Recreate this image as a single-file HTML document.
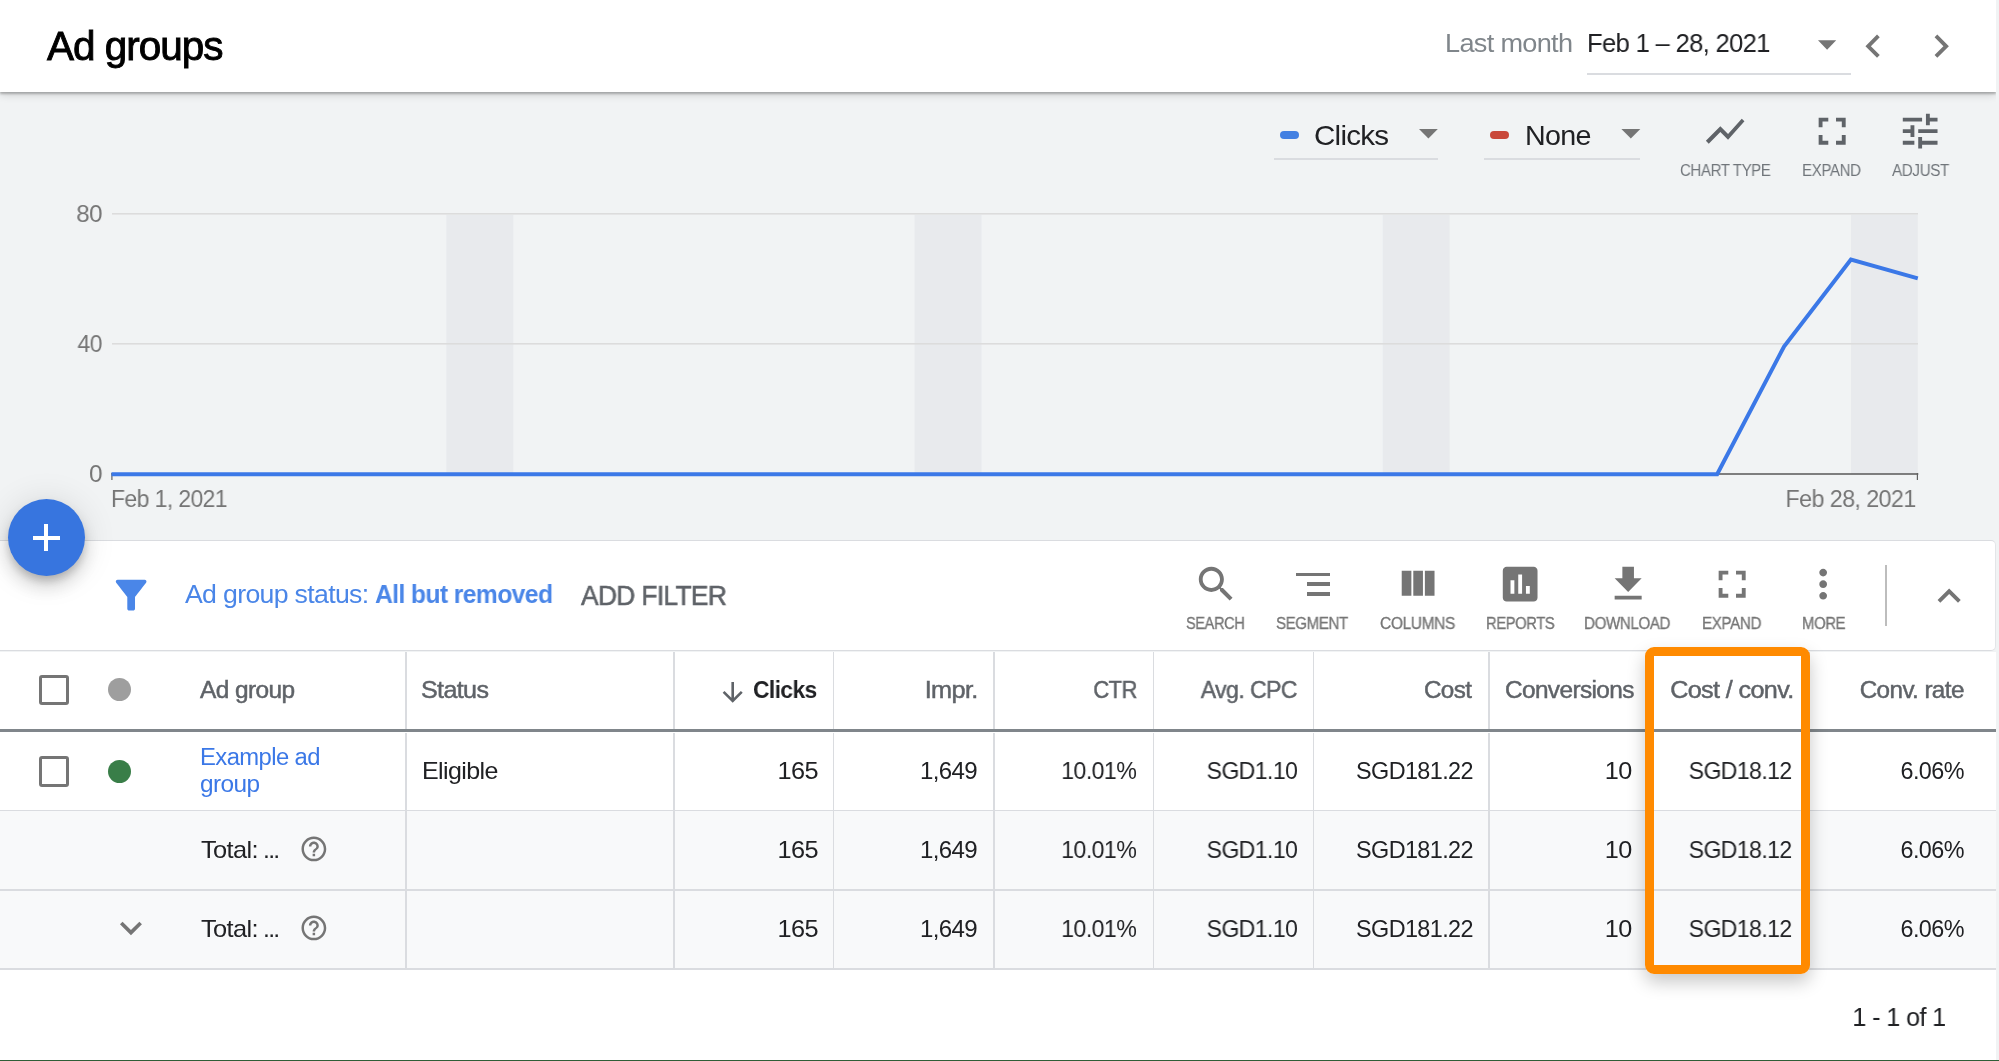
<!DOCTYPE html><html><head><meta charset="utf-8"><style>
html,body{margin:0;padding:0}body{width:1999px;height:1061px;position:relative;overflow:hidden;background:#f1f3f4;font-family:'Liberation Sans',sans-serif}
.t{position:absolute;white-space:nowrap;line-height:1;will-change:transform}
</style></head><body>
<svg style="position:absolute;left:0;top:0" width="1999" height="1061"><rect x="446.41" y="214.8" width="66.88" height="259.2" fill="#e8eaed"/><rect x="914.58" y="214.8" width="66.88" height="259.2" fill="#e8eaed"/><rect x="1382.75" y="214.8" width="66.88" height="259.2" fill="#e8eaed"/><rect x="1850.92" y="214.8" width="66.88" height="259.2" fill="#e8eaed"/><rect x="112" y="213" width="1806" height="1.6" fill="#dcdcdc"/><rect x="112" y="343" width="1806" height="1.6" fill="#dcdcdc"/><rect x="111.5" y="473.2" width="1806.8" height="1.6" fill="#616161"/><rect x="111.3" y="473" width="1.2" height="7" fill="#616161"/><rect x="1916.8" y="473" width="1.2" height="7" fill="#616161"/><polyline fill="none" stroke="#3b78e7" stroke-width="4" stroke-linejoin="miter" points="111.50,474.20 1717.16,474.20 1784.04,346.50 1850.92,259.60 1917.80,278.40"/></svg>
<div style="position:absolute;left:0.00px;top:0.00px;width:1996.00px;height:92.20px;background:#fff;box-shadow:0 2px 2px rgba(0,0,0,.24), 0 3px 8px rgba(0,0,0,.14);"></div>
<div style="position:absolute;left:1587.00px;top:73.30px;width:264.00px;height:2.00px;background:#dadce0;"></div>
<svg style="position:absolute;left:0;top:0" width="1999" height="200"><polygon points="1818,40.3 1836.2,40.3 1827.1,49.8" fill="#757575"/><polygon points="1419,129 1437.8,129 1428.4,138.6" fill="#757575"/><polygon points="1621.4,129 1640.3,129 1630.85,138.6" fill="#757575"/></svg>
<svg style="position:absolute;left:1849.70px;top:23.40px;" width="46.32" height="46.32" viewBox="0 0 24 24"><path fill="#757575" d="M15.41 7.41L14 6l-6 6 6 6 1.41-1.41L10.83 12z"/></svg>
<svg style="position:absolute;left:1918.40px;top:23.40px;" width="46.32" height="46.32" viewBox="0 0 24 24"><path fill="#757575" d="M10 6L8.59 7.41 13.17 12l-4.58 4.59L10 18l6-6z"/></svg>
<div style="position:absolute;left:1280.00px;top:131.00px;width:19.40px;height:8.00px;background:#4380e2;border-radius:4px;"></div>
<div style="position:absolute;left:1490.00px;top:131.00px;width:19.40px;height:8.00px;background:#c9483a;border-radius:4px;"></div>
<div style="position:absolute;left:1274.00px;top:158.00px;width:164.00px;height:2.00px;background:#dadce0;"></div>
<div style="position:absolute;left:1484.00px;top:158.00px;width:156.30px;height:2.00px;background:#dadce0;"></div>
<svg style="position:absolute;left:1701.50px;top:108.00px;" width="46.32" height="46.32" viewBox="0 0 24 24"><path fill="#5f6368" d="M3.5 18.49l6-6.01 4 4L22 6.92l-1.41-1.41-7.09 7.97-4-4L2 16.99z"/></svg>
<svg style="position:absolute;left:1808.55px;top:107.95px;" width="46.32" height="46.32" viewBox="0 0 24 24"><path fill="#5f6368" d="M7 14H5v5h5v-2H7v-3zm-2-4h2V7h3V5H5v5zm12 7h-3v2h5v-5h-2v3zM14 5v2h3v3h2V5h-5z"/></svg>
<svg style="position:absolute;left:1897.20px;top:107.90px;" width="46.32" height="46.32" viewBox="0 0 24 24"><path fill="#5f6368" d="M3 17v2h6v-2H3zM3 5v2h10V5H3zm10 16v-2h8v-2h-8v-2h-2v6h2zM7 9v2H3v2h4v2h2V9H7zm14 4v-2H11v2h10zm-6-4h2V7h4V5h-4V3h-2v6z"/></svg>
<div style="position:absolute;left:0.00px;top:539.80px;width:1996.00px;height:111.70px;background:#fff;box-sizing:border-box;border:1.7px solid #dadce0;border-left:none;border-right:1px solid #e3e5e8;border-radius:0 5px 5px 0;"></div>
<svg style="position:absolute;left:108.00px;top:572.30px;" width="46.32" height="46.32" viewBox="0 0 24 24"><path fill="#4a86e8" d="M4.25 5.61C6.27 8.2 10 13 10 13v6c0 .55.45 1 1 1h2c.55 0 1-.45 1-1v-6s3.72-4.8 5.74-7.39c.51-.66.04-1.61-.79-1.61H5.04c-.83 0-1.3.95-.79 1.61z"/></svg>
<svg style="position:absolute;left:1193.40px;top:561.00px;" width="46.32" height="46.32" viewBox="0 0 24 24"><path fill="#757575" d="M15.5 14h-.79l-.28-.27C15.41 12.59 16 11.11 16 9.5 16 5.91 13.09 3 9.5 3S3 5.91 3 9.5 5.91 16 9.5 16c1.61 0 3.09-.59 4.23-1.57l.27.28v.79l5 4.99L20.49 19l-4.99-5zm-6 0C7.01 14 5 11.99 5 9.5S7.01 5 9.5 5 14 7.01 14 9.5 11.99 14 9.5 14z"/></svg>
<div style="position:absolute;left:1295.80px;top:572.60px;width:34.50px;height:3.60px;background:#757575;"></div>
<div style="position:absolute;left:1307.20px;top:582.10px;width:23.10px;height:3.70px;background:#757575;"></div>
<div style="position:absolute;left:1307.20px;top:592.10px;width:23.10px;height:3.70px;background:#757575;"></div>
<svg style="position:absolute;left:1394.40px;top:561.00px;" width="46.32" height="46.32" viewBox="0 0 24 24"><path fill="#757575" d="M10 18h5V5h-5v13zm-6 0h5V5H4v13zM16 5v13h5V5h-5z"/></svg>
<svg style="position:absolute;left:1497.30px;top:561.20px;" width="46.32" height="46.32" viewBox="0 0 24 24"><path fill="#757575" d="M19 3H5c-1.1 0-2 .9-2 2v14c0 1.1.9 2 2 2h14c1.1 0 2-.9 2-2V5c0-1.1-.9-2-2-2zM9 17H7v-7h2v7zm4 0h-2V7h2v10zm4 0h-2v-4h2v4z"/></svg>
<svg style="position:absolute;left:1605.35px;top:561.10px;" width="46.32" height="46.32" viewBox="0 0 24 24"><path fill="#757575" d="M19 9h-4V3H9v6H5l7 7 7-7zM5 18v2h14v-2H5z"/></svg>
<svg style="position:absolute;left:1708.85px;top:561.15px;" width="46.32" height="46.32" viewBox="0 0 24 24"><path fill="#757575" d="M7 14H5v5h5v-2H7v-3zm-2-4h2V7h3V5H5v5zm12 7h-3v2h5v-5h-2v3zM14 5v2h3v3h2V5h-5z"/></svg>
<svg style="position:absolute;left:1800.20px;top:560.90px;" width="46.32" height="46.32" viewBox="0 0 24 24"><path fill="#757575" d="M12 8c1.1 0 2-.9 2-2s-.9-2-2-2-2 .9-2 2 .9 2 2 2zm0 2c-1.1 0-2 .9-2 2s.9 2 2 2 2-.9 2-2-.9-2-2-2zm0 6c-1.1 0-2 .9-2 2s.9 2 2 2 2-.9 2-2-.9-2-2-2z"/></svg>
<div style="position:absolute;left:1885.30px;top:565.20px;width:1.60px;height:61.20px;background:#bdbdbd;"></div>
<svg style="position:absolute;left:1926.40px;top:573.00px;" width="46.32" height="46.32" viewBox="0 0 24 24"><path fill="#757575" d="M12 8l-6 6 1.41 1.41L12 10.83l4.59 4.58L18 14z"/></svg>
<div style="position:absolute;left:0.00px;top:651.50px;width:1996.00px;height:408.50px;background:#fff;"></div>
<div style="position:absolute;left:0.00px;top:811.30px;width:1996.00px;height:157.90px;background:#f8f9fa;"></div>
<div style="position:absolute;left:0.00px;top:729.30px;width:1996.00px;height:3.20px;background:#80868b;"></div>
<div style="position:absolute;left:0.00px;top:809.90px;width:1996.00px;height:1.60px;background:#dadce0;"></div>
<div style="position:absolute;left:0.00px;top:889.10px;width:1996.00px;height:1.60px;background:#dadce0;"></div>
<div style="position:absolute;left:0.00px;top:968.40px;width:1996.00px;height:1.60px;background:#dadce0;"></div>
<div style="position:absolute;left:405.00px;top:651.50px;width:1.60px;height:77.80px;background:#dadce0;"></div>
<div style="position:absolute;left:405.00px;top:732.50px;width:1.60px;height:236.50px;background:#dadce0;"></div>
<div style="position:absolute;left:673.00px;top:651.50px;width:1.60px;height:77.80px;background:#dadce0;"></div>
<div style="position:absolute;left:673.00px;top:732.50px;width:1.60px;height:236.50px;background:#dadce0;"></div>
<div style="position:absolute;left:832.90px;top:651.50px;width:1.60px;height:77.80px;background:#dadce0;"></div>
<div style="position:absolute;left:832.90px;top:732.50px;width:1.60px;height:236.50px;background:#dadce0;"></div>
<div style="position:absolute;left:993.10px;top:651.50px;width:1.60px;height:77.80px;background:#dadce0;"></div>
<div style="position:absolute;left:993.10px;top:732.50px;width:1.60px;height:236.50px;background:#dadce0;"></div>
<div style="position:absolute;left:1152.90px;top:651.50px;width:1.60px;height:77.80px;background:#dadce0;"></div>
<div style="position:absolute;left:1152.90px;top:732.50px;width:1.60px;height:236.50px;background:#dadce0;"></div>
<div style="position:absolute;left:1312.90px;top:651.50px;width:1.60px;height:77.80px;background:#dadce0;"></div>
<div style="position:absolute;left:1312.90px;top:732.50px;width:1.60px;height:236.50px;background:#dadce0;"></div>
<div style="position:absolute;left:1488.30px;top:651.50px;width:1.60px;height:77.80px;background:#dadce0;"></div>
<div style="position:absolute;left:1488.30px;top:732.50px;width:1.60px;height:236.50px;background:#dadce0;"></div>
<div style="position:absolute;left:1648.80px;top:651.50px;width:1.60px;height:77.80px;background:#dadce0;"></div>
<div style="position:absolute;left:1648.80px;top:732.50px;width:1.60px;height:236.50px;background:#dadce0;"></div>
<div style="position:absolute;left:1808.80px;top:651.50px;width:1.60px;height:77.80px;background:#dadce0;"></div>
<div style="position:absolute;left:1808.80px;top:732.50px;width:1.60px;height:236.50px;background:#dadce0;"></div>
<div style="position:absolute;left:38.80px;top:675.00px;width:30.30px;height:30.10px;background:transparent;box-sizing:border-box;border:3.3px solid #757575;border-radius:3px;"></div>
<div style="position:absolute;left:38.90px;top:755.90px;width:30.60px;height:30.70px;background:transparent;box-sizing:border-box;border:3.3px solid #757575;border-radius:3px;"></div>
<div style="position:absolute;left:108.10px;top:678.30px;width:23.20px;height:23.20px;background:#9e9e9e;border-radius:50%;"></div>
<div style="position:absolute;left:107.90px;top:759.50px;width:23.10px;height:23.10px;background:#397e48;border-radius:50%;"></div>
<svg style="position:absolute;left:0;top:0" width="1999" height="1061"><path d="M732.7 682 V700 M723.6 691.8 L732.7 700.9 L741.8 691.8" stroke="#5f6368" stroke-width="2.6" fill="none"/></svg>
<svg style="position:absolute;left:299.10px;top:833.50px;" width="29.76" height="29.76" viewBox="0 0 24 24"><path fill="#757575" d="M11 18h2v-2h-2v2zm1-16C6.48 2 2 6.48 2 12s4.48 10 10 10 10-4.48 10-10S17.52 2 12 2zm0 18c-4.41 0-8-3.59-8-8s3.59-8 8-8 8 3.59 8 8-3.59 8-8 8zm0-14c-2.21 0-4 1.79-4 4h2c0-1.1.9-2 2-2s2 .9 2 2c0 2-3 1.75-3 5h2c0-2.25 3-2.5 3-5 0-2.21-1.79-4-4-4z"/></svg>
<svg style="position:absolute;left:299.10px;top:912.50px;" width="29.76" height="29.76" viewBox="0 0 24 24"><path fill="#757575" d="M11 18h2v-2h-2v2zm1-16C6.48 2 2 6.48 2 12s4.48 10 10 10 10-4.48 10-10S17.52 2 12 2zm0 18c-4.41 0-8-3.59-8-8s3.59-8 8-8 8 3.59 8 8-3.59 8-8 8zm0-14c-2.21 0-4 1.79-4 4h2c0-1.1.9-2 2-2s2 .9 2 2c0 2-3 1.75-3 5h2c0-2.25 3-2.5 3-5 0-2.21-1.79-4-4-4z"/></svg>
<svg style="position:absolute;left:109.20px;top:905.70px;" width="43.92" height="43.92" viewBox="0 0 24 24"><path fill="#757575" d="M16.59 8.59L12 13.17 7.41 8.59 6 10l6 6 6-6z"/></svg>
<div style="position:absolute;left:1996.00px;top:0.00px;width:3.00px;height:1061.00px;background:#f1f3f4;"></div>
<div style="position:absolute;left:0.00px;top:1060.00px;width:1999.00px;height:1.00px;background:#2f5e37;"></div>
<div id="title" class="t" style="left:46.61px;transform-origin:0 0;top:26.80px;font-size:40.29px;letter-spacing:-1.01px;transform:scaleX(1.0048);color:#000;-webkit-text-stroke:0.89px #000;">Ad groups</div>
<div id="lastmonth" class="t" style="left:1445.12px;transform-origin:0 0;top:30.00px;font-size:26.38px;letter-spacing:-0.66px;transform:scaleX(1.0279);color:#80868b;">Last month</div>
<div id="date" class="t" style="left:1587.15px;transform-origin:0 0;top:30.00px;font-size:26.38px;letter-spacing:-0.66px;transform:scaleX(0.9682);color:#202124;">Feb 1 – 28, 2021</div>
<div id="clicks" class="t" style="left:1313.70px;transform-origin:0 0;top:120.50px;font-size:28.41px;letter-spacing:-0.71px;transform:scaleX(1.0407);color:#202124;">Clicks</div>
<div id="none" class="t" style="left:1524.87px;transform-origin:0 0;top:120.50px;font-size:28.41px;letter-spacing:-0.71px;transform:scaleX(1.0086);color:#202124;">None</div>
<div id="charttype" class="t" style="left:1680.06px;transform-origin:0 0;top:162.50px;font-size:15.94px;letter-spacing:-0.40px;transform:scaleX(0.9423);color:#70757a;">CHART TYPE</div>
<div id="expand1" class="t" style="left:1801.90px;transform-origin:0 0;top:162.50px;font-size:15.94px;letter-spacing:-0.40px;transform:scaleX(0.9463);color:#70757a;">EXPAND</div>
<div id="adjust" class="t" style="left:1892.13px;transform-origin:0 0;top:162.50px;font-size:15.94px;letter-spacing:-0.40px;transform:scaleX(0.9556);color:#70757a;">ADJUST</div>
<div id="y80" class="t" style="right:1896.95px;transform-origin:100% 0;top:201.60px;font-size:24.35px;letter-spacing:-0.61px;transform:scaleX(0.9903);color:#757575;">80</div>
<div id="y40" class="t" style="right:1897.31px;transform-origin:100% 0;top:331.60px;font-size:24.35px;letter-spacing:-0.61px;transform:scaleX(0.9439);color:#757575;">40</div>
<div id="y0" class="t" style="right:1896.90px;transform-origin:100% 0;top:461.60px;font-size:24.35px;letter-spacing:0.00px;transform:scaleX(0.9979);color:#757575;">0</div>
<div id="x1" class="t" style="left:111.16px;transform-origin:0 0;top:487.10px;font-size:23.91px;letter-spacing:-0.60px;transform:scaleX(0.9586);color:#757575;">Feb 1, 2021</div>
<div id="x28" class="t" style="right:83.13px;transform-origin:100% 0;top:487.10px;font-size:23.91px;letter-spacing:-0.60px;transform:scaleX(0.9743);color:#757575;">Feb 28, 2021</div>
<div id="filter1" class="t" style="left:184.93px;transform-origin:0 0;top:582.30px;font-size:25.51px;letter-spacing:-0.64px;transform:scaleX(1.0458);color:#4a86e8;">Ad group status:</div>
<div id="filter2" class="t" style="left:374.61px;transform-origin:0 0;top:582.30px;font-size:25.51px;letter-spacing:-0.64px;transform:scaleX(0.9689);color:#4a86e8;font-weight:bold;">All but removed</div>
<div id="addfilter" class="t" style="left:581.16px;transform-origin:0 0;top:582.30px;font-size:27.54px;letter-spacing:-0.69px;transform:scaleX(0.9575);color:#5f6368;-webkit-text-stroke:0.55px #5f6368;">ADD FILTER</div>
<div id="search" class="t" style="left:1186.49px;transform-origin:0 0;top:615.50px;font-size:15.65px;letter-spacing:-0.39px;transform:scaleX(0.9293);color:#757575;-webkit-text-stroke:0.31px #757575;">SEARCH</div>
<div id="segment" class="t" style="left:1275.95px;transform-origin:0 0;top:615.50px;font-size:15.65px;letter-spacing:-0.39px;transform:scaleX(0.9620);color:#757575;-webkit-text-stroke:0.31px #757575;">SEGMENT</div>
<div id="columns" class="t" style="left:1380.23px;transform-origin:0 0;top:615.50px;font-size:15.65px;letter-spacing:-0.39px;transform:scaleX(0.9916);color:#757575;-webkit-text-stroke:0.31px #757575;">COLUMNS</div>
<div id="reports" class="t" style="left:1485.72px;transform-origin:0 0;top:615.50px;font-size:15.65px;letter-spacing:-0.39px;transform:scaleX(0.9416);color:#757575;-webkit-text-stroke:0.31px #757575;">REPORTS</div>
<div id="download" class="t" style="left:1584.18px;transform-origin:0 0;top:615.50px;font-size:15.65px;letter-spacing:-0.39px;transform:scaleX(0.9678);color:#757575;-webkit-text-stroke:0.31px #757575;">DOWNLOAD</div>
<div id="expand2" class="t" style="left:1701.57px;transform-origin:0 0;top:615.50px;font-size:15.65px;letter-spacing:-0.39px;transform:scaleX(0.9707);color:#757575;-webkit-text-stroke:0.31px #757575;">EXPAND</div>
<div id="more" class="t" style="left:1801.92px;transform-origin:0 0;top:615.50px;font-size:15.65px;letter-spacing:-0.39px;transform:scaleX(0.9518);color:#757575;-webkit-text-stroke:0.31px #757575;">MORE</div>
<div id="h_adgroup" class="t" style="left:200.20px;transform-origin:0 0;top:677.90px;font-size:24.20px;letter-spacing:-0.60px;transform:scaleX(1.0110);color:#5f6368;-webkit-text-stroke:0.48px #5f6368;">Ad group</div>
<div id="h_status" class="t" style="left:420.79px;transform-origin:0 0;top:677.90px;font-size:24.20px;letter-spacing:-0.60px;transform:scaleX(1.0369);color:#5f6368;-webkit-text-stroke:0.48px #5f6368;">Status</div>
<div id="h_clicks" class="t" style="right:1181.95px;transform-origin:100% 0;top:677.90px;font-size:24.20px;letter-spacing:-0.60px;transform:scaleX(0.9400);color:#202124;font-weight:bold;">Clicks</div>
<div id="h_impr" class="t" style="right:1021.56px;transform-origin:100% 0;top:677.90px;font-size:24.20px;letter-spacing:-0.60px;transform:scaleX(1.0457);color:#5f6368;-webkit-text-stroke:0.48px #5f6368;">Impr.</div>
<div id="h_ctr" class="t" style="right:861.68px;transform-origin:100% 0;top:677.90px;font-size:24.20px;letter-spacing:-0.60px;transform:scaleX(0.9103);color:#5f6368;-webkit-text-stroke:0.48px #5f6368;">CTR</div>
<div id="h_avgcpc" class="t" style="right:702.17px;transform-origin:100% 0;top:677.90px;font-size:24.20px;letter-spacing:-0.60px;transform:scaleX(0.9529);color:#5f6368;-webkit-text-stroke:0.48px #5f6368;">Avg. CPC</div>
<div id="h_cost" class="t" style="right:527.81px;transform-origin:100% 0;top:677.90px;font-size:24.20px;letter-spacing:-0.60px;transform:scaleX(1.0006);color:#5f6368;-webkit-text-stroke:0.48px #5f6368;">Cost</div>
<div id="h_conversions" class="t" style="right:365.52px;transform-origin:100% 0;top:677.90px;font-size:24.20px;letter-spacing:-0.60px;transform:scaleX(1.0086);color:#5f6368;-webkit-text-stroke:0.48px #5f6368;">Conversions</div>
<div id="h_costconv" class="t" style="right:205.78px;transform-origin:100% 0;top:677.90px;font-size:24.20px;letter-spacing:-0.60px;transform:scaleX(1.0408);color:#5f6368;-webkit-text-stroke:0.48px #5f6368;">Cost / conv.</div>
<div id="h_convrate" class="t" style="right:34.74px;transform-origin:100% 0;top:677.90px;font-size:24.20px;letter-spacing:-0.60px;transform:scaleX(1.0029);color:#5f6368;-webkit-text-stroke:0.48px #5f6368;">Conv. rate</div>
<div id="example1" class="t" style="left:200.19px;transform-origin:0 0;top:746.10px;font-size:23.33px;letter-spacing:-0.58px;transform:scaleX(1.0218);color:#3b78e7;">Example ad</div>
<div id="example2" class="t" style="left:200.30px;transform-origin:0 0;top:772.80px;font-size:23.33px;letter-spacing:-0.58px;transform:scaleX(1.0462);color:#3b78e7;">group</div>
<div id="eligible" class="t" style="left:421.52px;transform-origin:0 0;top:759.80px;font-size:23.19px;letter-spacing:-0.58px;transform:scaleX(1.0791);color:#202124;">Eligible</div>
<div id="v0_0" class="t" style="right:1181.34px;transform-origin:100% 0;top:759.80px;font-size:23.19px;letter-spacing:-0.58px;transform:scaleX(1.0916);color:#202124;">165</div>
<div id="v0_1" class="t" style="right:1022.08px;transform-origin:100% 0;top:759.80px;font-size:23.19px;letter-spacing:-0.58px;transform:scaleX(1.0378);color:#202124;">1,649</div>
<div id="v0_2" class="t" style="right:862.54px;transform-origin:100% 0;top:759.80px;font-size:23.19px;letter-spacing:-0.58px;transform:scaleX(0.9972);color:#202124;">10.01%</div>
<div id="v0_3" class="t" style="right:701.50px;transform-origin:100% 0;top:759.80px;font-size:23.19px;letter-spacing:-0.58px;transform:scaleX(0.9936);color:#202124;">SGD1.10</div>
<div id="v0_4" class="t" style="right:526.30px;transform-origin:100% 0;top:759.80px;font-size:23.19px;letter-spacing:-0.58px;transform:scaleX(1.0084);color:#202124;">SGD181.22</div>
<div id="v0_5" class="t" style="right:367.39px;transform-origin:100% 0;top:759.80px;font-size:23.19px;letter-spacing:-0.58px;transform:scaleX(1.0876);color:#202124;">10</div>
<div id="v0_6" class="t" style="right:207.15px;transform-origin:100% 0;top:759.80px;font-size:23.19px;letter-spacing:-0.58px;transform:scaleX(0.9938);color:#202124;">SGD18.12</div>
<div id="v0_7" class="t" style="right:34.88px;transform-origin:100% 0;top:759.80px;font-size:23.19px;letter-spacing:-0.58px;transform:scaleX(1.0081);color:#202124;">6.06%</div>
<div id="v1_0" class="t" style="right:1181.34px;transform-origin:100% 0;top:839.00px;font-size:23.19px;letter-spacing:-0.58px;transform:scaleX(1.0916);color:#202124;">165</div>
<div id="v1_1" class="t" style="right:1022.08px;transform-origin:100% 0;top:839.00px;font-size:23.19px;letter-spacing:-0.58px;transform:scaleX(1.0378);color:#202124;">1,649</div>
<div id="v1_2" class="t" style="right:862.54px;transform-origin:100% 0;top:839.00px;font-size:23.19px;letter-spacing:-0.58px;transform:scaleX(0.9972);color:#202124;">10.01%</div>
<div id="v1_3" class="t" style="right:701.50px;transform-origin:100% 0;top:839.00px;font-size:23.19px;letter-spacing:-0.58px;transform:scaleX(0.9936);color:#202124;">SGD1.10</div>
<div id="v1_4" class="t" style="right:526.30px;transform-origin:100% 0;top:839.00px;font-size:23.19px;letter-spacing:-0.58px;transform:scaleX(1.0084);color:#202124;">SGD181.22</div>
<div id="v1_5" class="t" style="right:367.39px;transform-origin:100% 0;top:839.00px;font-size:23.19px;letter-spacing:-0.58px;transform:scaleX(1.0876);color:#202124;">10</div>
<div id="v1_6" class="t" style="right:207.15px;transform-origin:100% 0;top:839.00px;font-size:23.19px;letter-spacing:-0.58px;transform:scaleX(0.9938);color:#202124;">SGD18.12</div>
<div id="v1_7" class="t" style="right:34.88px;transform-origin:100% 0;top:839.00px;font-size:23.19px;letter-spacing:-0.58px;transform:scaleX(1.0081);color:#202124;">6.06%</div>
<div id="v2_0" class="t" style="right:1181.34px;transform-origin:100% 0;top:918.00px;font-size:23.19px;letter-spacing:-0.58px;transform:scaleX(1.0916);color:#202124;">165</div>
<div id="v2_1" class="t" style="right:1022.08px;transform-origin:100% 0;top:918.00px;font-size:23.19px;letter-spacing:-0.58px;transform:scaleX(1.0378);color:#202124;">1,649</div>
<div id="v2_2" class="t" style="right:862.54px;transform-origin:100% 0;top:918.00px;font-size:23.19px;letter-spacing:-0.58px;transform:scaleX(0.9972);color:#202124;">10.01%</div>
<div id="v2_3" class="t" style="right:701.50px;transform-origin:100% 0;top:918.00px;font-size:23.19px;letter-spacing:-0.58px;transform:scaleX(0.9936);color:#202124;">SGD1.10</div>
<div id="v2_4" class="t" style="right:526.30px;transform-origin:100% 0;top:918.00px;font-size:23.19px;letter-spacing:-0.58px;transform:scaleX(1.0084);color:#202124;">SGD181.22</div>
<div id="v2_5" class="t" style="right:367.39px;transform-origin:100% 0;top:918.00px;font-size:23.19px;letter-spacing:-0.58px;transform:scaleX(1.0876);color:#202124;">10</div>
<div id="v2_6" class="t" style="right:207.15px;transform-origin:100% 0;top:918.00px;font-size:23.19px;letter-spacing:-0.58px;transform:scaleX(0.9938);color:#202124;">SGD18.12</div>
<div id="v2_7" class="t" style="right:34.88px;transform-origin:100% 0;top:918.00px;font-size:23.19px;letter-spacing:-0.58px;transform:scaleX(1.0081);color:#202124;">6.06%</div>
<div id="total1" class="t" style="left:200.66px;transform-origin:0 0;top:839.00px;font-size:23.19px;letter-spacing:-0.58px;transform:scaleX(1.0961);color:#202124;">Total:</div>
<div id="total2" class="t" style="left:200.66px;transform-origin:0 0;top:918.00px;font-size:23.19px;letter-spacing:-0.58px;transform:scaleX(1.0961);color:#202124;">Total:</div>
<div id="total1d" class="t" style="left:262.61px;transform-origin:0 0;top:839.00px;font-size:23.19px;letter-spacing:-1.60px;transform:scaleX(1.0635);color:#202124;">...</div>
<div id="total2d" class="t" style="left:262.61px;transform-origin:0 0;top:918.00px;font-size:23.19px;letter-spacing:-1.60px;transform:scaleX(1.0635);color:#202124;">...</div>
<div id="pag" class="t" style="right:53.84px;transform-origin:100% 0;top:1003.50px;font-size:26.38px;letter-spacing:-0.66px;transform:scaleX(0.9554);color:#202124;">1 - 1 of 1</div>
<div style="position:absolute;left:1645.10px;top:647.00px;width:164.80px;height:326.60px;background:transparent;box-sizing:border-box;border:9px solid #ff8a00;border-radius:9px;box-shadow:0 8px 18px rgba(0,0,0,.22);"></div>
<div style="position:absolute;left:7.50px;top:498.70px;width:77.40px;height:77.40px;background:#3775df;border-radius:50%;box-shadow:0 6px 10px -2px rgba(0,0,0,.2), 0 11px 19px 0 rgba(0,0,0,.14), 0 2px 34px 0 rgba(0,0,0,.12);"></div>
<div style="position:absolute;left:32.80px;top:536.00px;width:27.20px;height:4.00px;background:#fff;"></div>
<div style="position:absolute;left:43.90px;top:524.10px;width:4.30px;height:27.20px;background:#fff;"></div>
</body></html>
